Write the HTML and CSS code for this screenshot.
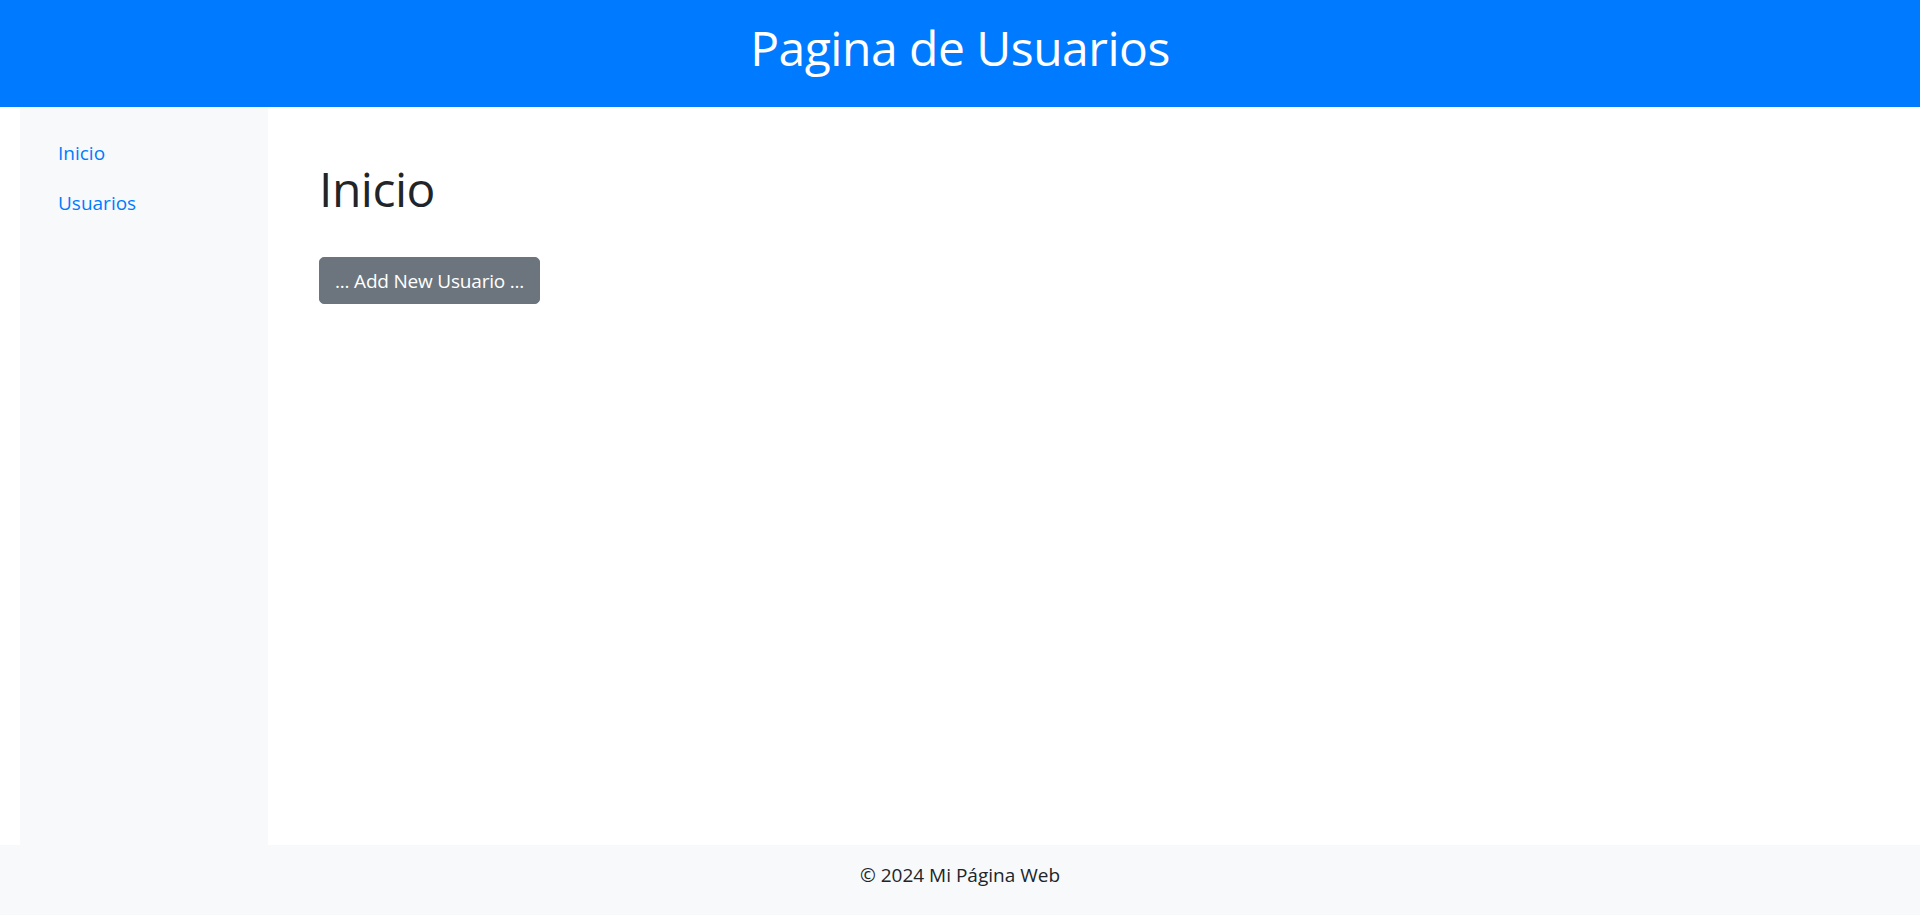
FILE: index.html
```html
<!DOCTYPE html>
<html lang="es">
<head>
<meta charset="utf-8">
<title>Pagina de Usuarios</title>
<link rel="stylesheet" href="styles.css">
</head>
<body>
  <header class="topbar">
    <h1 class="topbar-title">Pagina de Usuarios</h1>
  </header>
  <div class="layout">
    <nav class="sidebar">
      <a class="nav-link" href="#">Inicio</a>
      <a class="nav-link" href="#">Usuarios</a>
    </nav>
    <main class="content">
      <h1 class="page-title">Inicio</h1>
      <button class="btn-secondary" type="button">... Add New Usuario ...</button>
    </main>
  </div>
  <footer class="footer">© 2024 Mi Página Web</footer>
</body>
</html>
```
FILE: styles.css
```css
* { box-sizing: border-box; }
html, body { height: 100%; }
body {
  margin: 0;
  display: flex;
  flex-direction: column;
  font-family: "Open Sans", "Noto Sans", sans-serif;
  font-size: 19px;
  line-height: 30px;
  color: #212529;
  background: #fff;
}
.topbar {
  height: 107px;
  flex: none;
  background: #007bff;
  display: flex;
  align-items: center;
  justify-content: center;
  padding-bottom: 11px;
}
.topbar-title {
  margin: 0;
  font-size: 48px;
  line-height: 60px;
  font-weight: 400;
  letter-spacing: -0.5px;
  color: #fff;
}
.layout {
  flex: 1;
  display: flex;
  padding-left: 20px;
  min-height: 0;
}
.sidebar {
  width: 248px;
  flex: none;
  background: #f8f9fa;
  padding: 21px 0;
  display: flex;
  flex-direction: column;
}
.nav-link {
  display: block;
  padding: 10px 38px;
  color: #007bff;
  text-decoration: none;
}
.content {
  flex: 1;
  padding: 52px 0 0 51px;
}
.page-title {
  margin: 0 0 38px;
  font-size: 48px;
  line-height: 60px;
  font-weight: 400;
  letter-spacing: -0.5px;
}
.btn-secondary {
  font-family: inherit;
  font-size: 19px;
  line-height: 30px;
  letter-spacing: -0.2px;
  padding: 7.5px 15px;
  border: 1px solid #6c757d;
  border-radius: 5px;
  background: #6c757d;
  color: #fff;
  cursor: pointer;
}
.footer {
  flex: none;
  height: 70px;
  background: #f8f9fa;
  display: flex;
  align-items: center;
  justify-content: center;
  padding-bottom: 10px;
}
```
